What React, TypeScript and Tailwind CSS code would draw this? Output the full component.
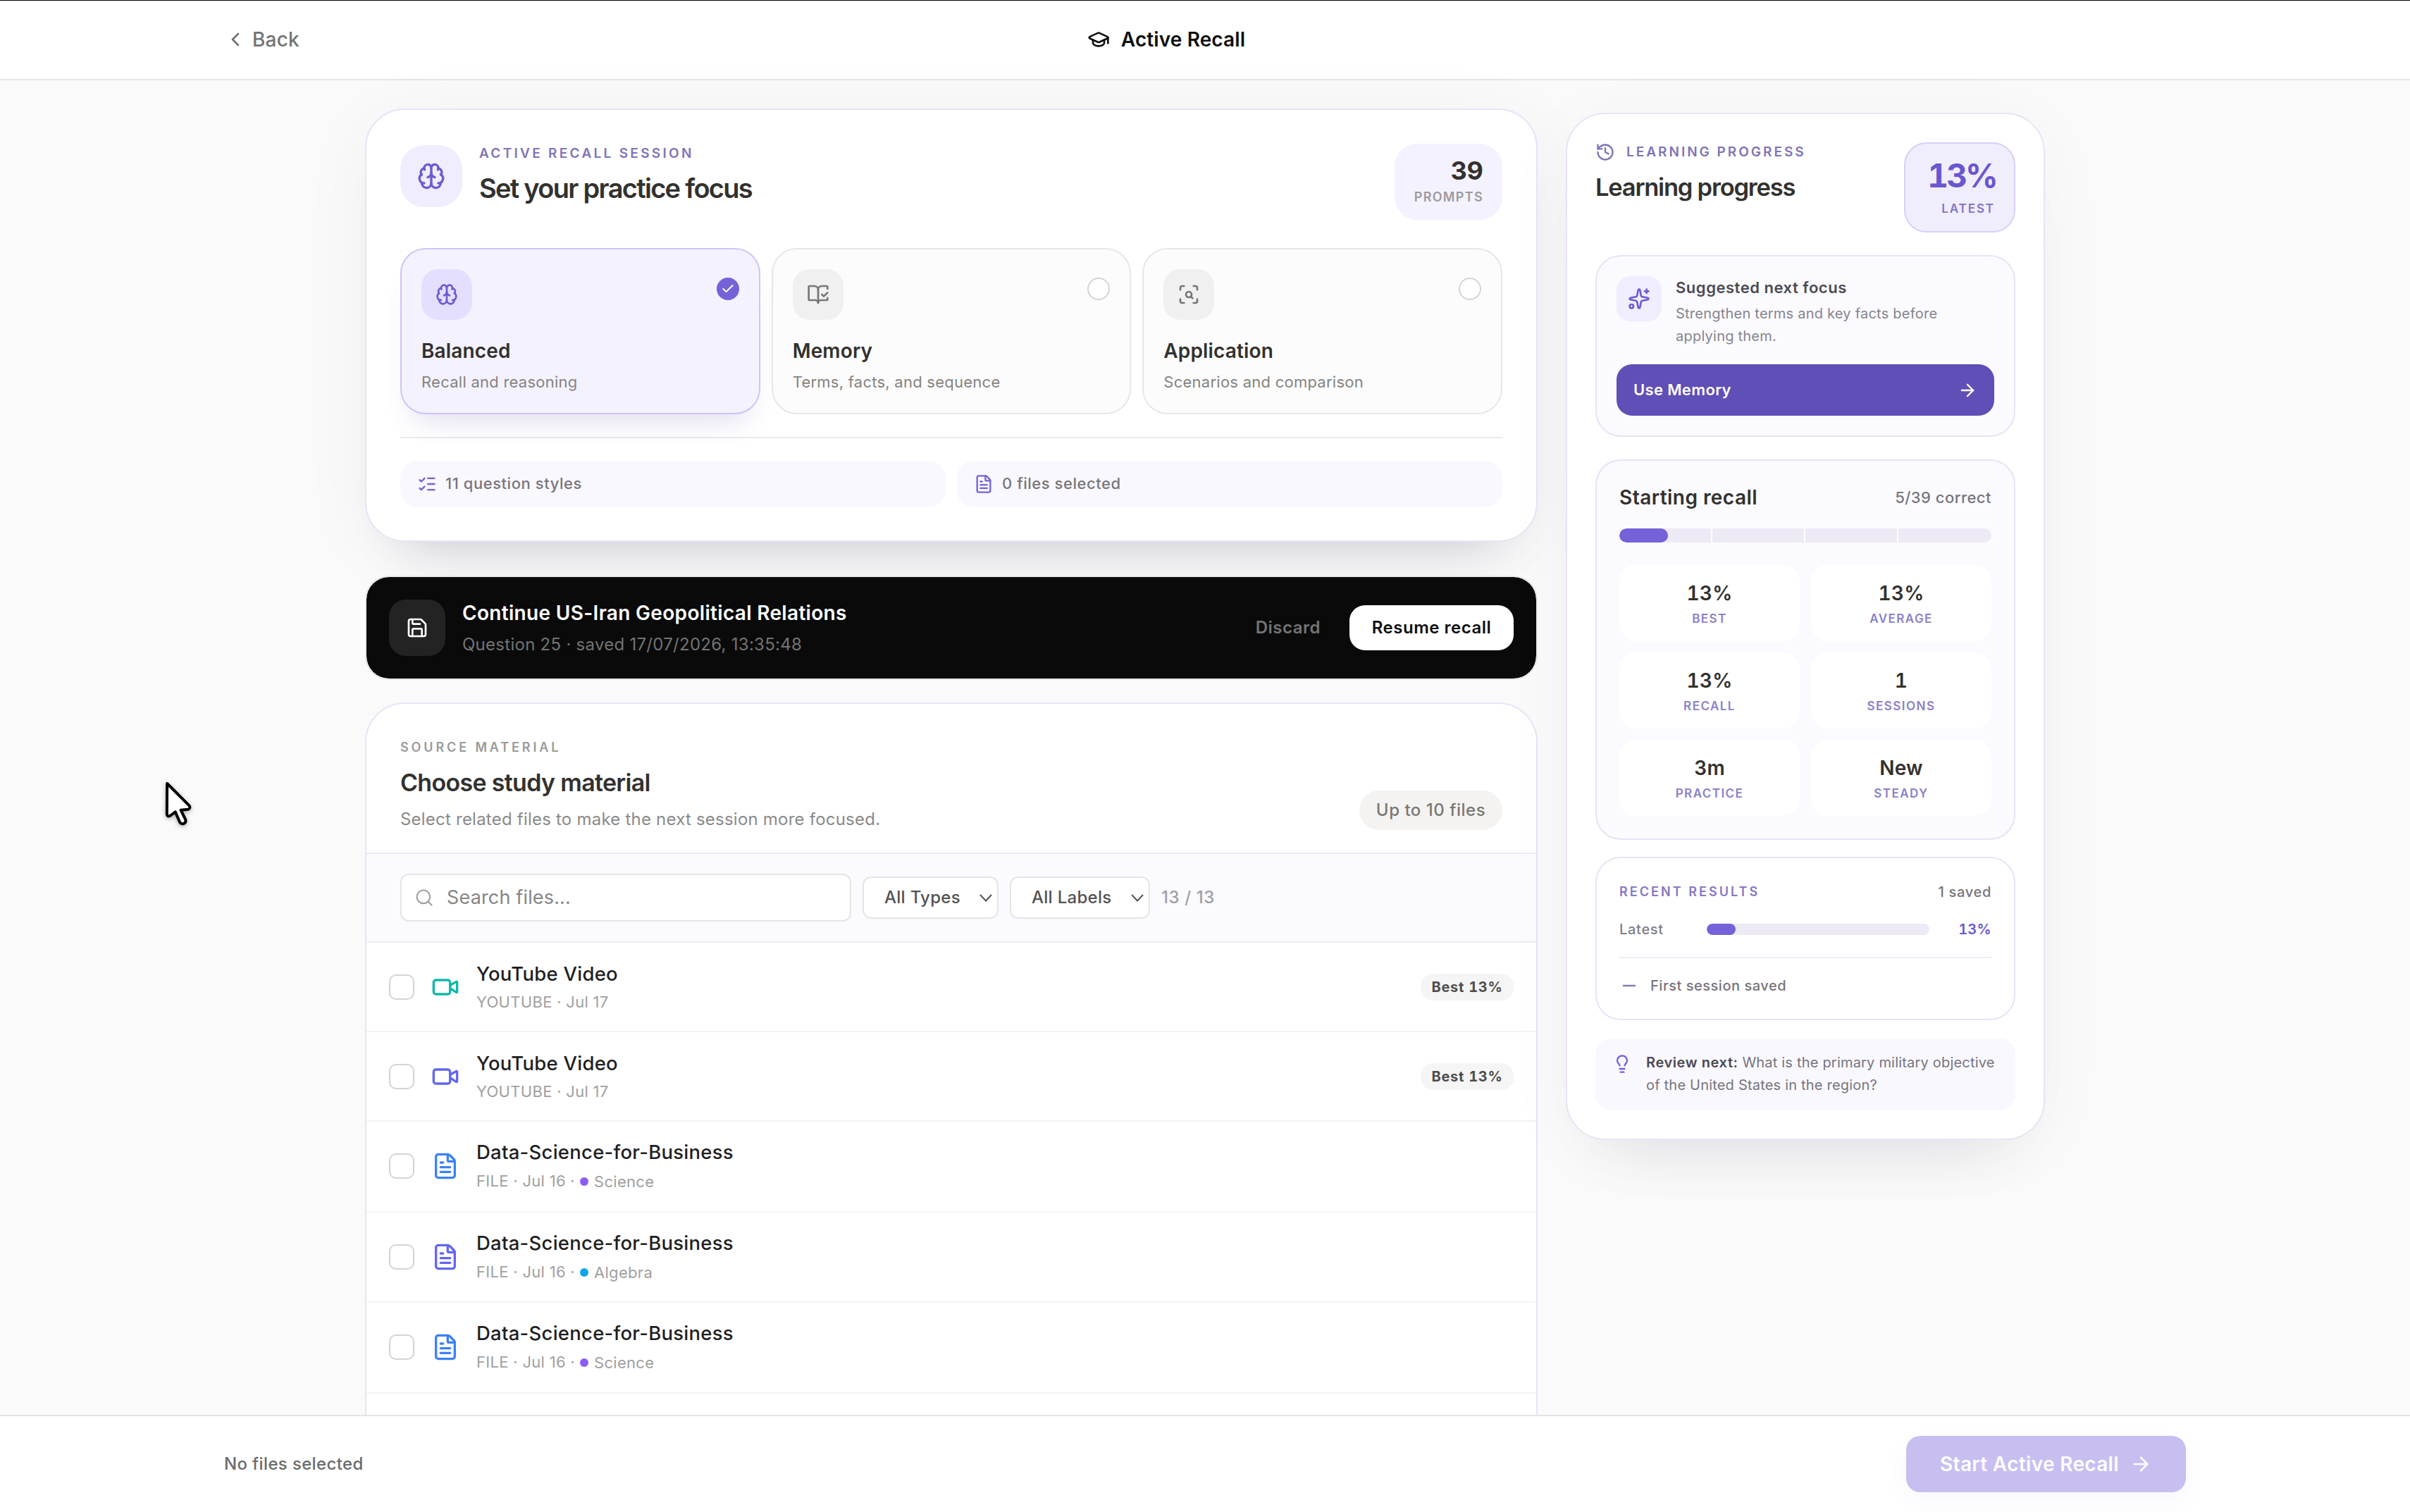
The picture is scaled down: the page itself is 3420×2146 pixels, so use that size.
import { useState } from 'react';
import {
  ArrowRight,
  BookOpenCheck,
  Brain,
  Check,
  ChevronLeft,
  FileText,
  GraduationCap,
  History,
  Lightbulb,
  ListChecks,
  Minus,
  Save,
  ScanSearch,
  Search,
  Sparkles,
  Video,
} from 'lucide-react';

const focusModes = [
  { id: 'balanced', name: 'Balanced', description: 'Recall and reasoning', icon: Brain },
  { id: 'memory', name: 'Memory', description: 'Terms, facts, and sequence', icon: BookOpenCheck },
  { id: 'application', name: 'Application', description: 'Scenarios and comparison', icon: ScanSearch },
];

const stats = [
  { value: '13%', label: 'Best' },
  { value: '13%', label: 'Average' },
  { value: '13%', label: 'Recall' },
  { value: '1', label: 'Sessions' },
  { value: '3m', label: 'Practice' },
  { value: 'New', label: 'Steady' },
];

const files = [
  { id: 1, title: 'YouTube Video', type: 'YOUTUBE', date: 'Jul 17', color: 'text-[#14b8a6]', best: 13 },
  { id: 2, title: 'YouTube Video', type: 'YOUTUBE', date: 'Jul 17', color: 'text-[#6366f1]', best: 13 },
  { id: 3, title: 'Data-Science-for-Business', type: 'FILE', date: 'Jul 16', color: 'text-[#3b82f6]', label: 'Science', dot: 'bg-[#8b5cf6]' },
  { id: 4, title: 'Data-Science-for-Business', type: 'FILE', date: 'Jul 16', color: 'text-[#6366f1]', label: 'Algebra', dot: 'bg-[#0ea5e9]' },
  { id: 5, title: 'Data-Science-for-Business', type: 'FILE', date: 'Jul 16', color: 'text-[#3b82f6]', label: 'Science', dot: 'bg-[#8b5cf6]' },
];

const score = 13;

function SelectBox({ label, className }: { label: string; className: string }) {
  return (
    <button
      className={`flex h-[60px] shrink-0 items-center justify-between rounded-xl border-2 border-[#e5e5e5] bg-white pl-[29px] pr-[7px] text-2xl font-medium tracking-[0.28px] text-[#525252] ${className}`}
    >
      {label}
      <svg width="18" height="11" viewBox="0 0 18 11" fill="none" stroke="currentColor" strokeWidth="2">
        <path d="M1 1l8 8.5L17 1" />
      </svg>
    </button>
  );
}

function FocusPanel() {
  const [mode, setMode] = useState('balanced');

  return (
    <section className="rounded-[56px] border-2 border-[#e6e4f6] bg-white px-12 pb-[47px] pt-12 shadow-[0_16px_110px_rgba(24,20,60,0.045),0_56px_72px_-56px_rgba(24,20,60,0.2)]">
      <div className="flex h-[108px] items-start justify-between">
        <div className="flex gap-6">
          <div className="mt-0.5 flex size-[88px] items-center justify-center rounded-[34px] bg-[#f0edfe] text-[#6d5bd0]">
            <Brain className="size-10" />
          </div>
          <div>
            <p className="text-[19px] font-semibold uppercase leading-7 tracking-[3.3px] text-[#7f73b8]">
              Active Recall Session
            </p>
            <h1 className="mt-[11px] text-[38px] font-semibold leading-[48px] tracking-[-1.7px] text-[#32312e]">
              Set your practice focus
            </h1>
          </div>
        </div>
        <div className="h-[108px] w-[153px] rounded-[32px] bg-[#f4f2ff] pr-[27px] pt-[18px] text-right">
          <p className="text-4xl font-bold leading-10 text-[#32312e]">39</p>
          <p className="mt-1.5 text-lg font-semibold uppercase leading-6 tracking-[1.33px] text-[#9c9a9c]">Prompts</p>
        </div>
      </div>

      <div className="mt-10 grid grid-cols-3 gap-4">
        {focusModes.map(({ id, name, description, icon: Icon }) => {
          const active = id === mode;
          return (
            <button
              key={id}
              onClick={() => setMode(id)}
              className={`h-[236px] rounded-[36px] border-2 px-7 pb-7 pt-[27px] text-left ${
                active
                  ? 'border-[#cdc5f9] bg-[#f4f2ff] shadow-[0_28px_40px_-20px_rgba(70,55,160,0.18)]'
                  : 'border-[#e7e7e7] bg-[#fcfcfc]'
              }`}
            >
              <div className="flex items-start justify-between">
                <span
                  className={`flex size-[72px] items-center justify-center rounded-3xl ${
                    active ? 'bg-[#e5dfff] text-[#6d5bd0]' : 'bg-[#f0f0f0] text-[#767676]'
                  }`}
                >
                  <Icon className="size-8" />
                </span>
                {active ? (
                  <span className="mt-3 flex size-8 items-center justify-center rounded-full bg-[#7562d8] text-white">
                    <Check className="size-5" strokeWidth={2.4} />
                  </span>
                ) : (
                  <span className="mt-3 size-8 rounded-full border-2 border-[#d4d4d4] bg-white" />
                )}
              </div>
              <h3 className="mt-[26px] text-[28px] font-semibold leading-9 tracking-[0.15px] text-[#32312e]">{name}</h3>
              <p className="mt-[11px] text-[22px] leading-[30px] tracking-[0.25px] text-[#85837f]">{description}</p>
            </button>
          );
        })}
      </div>

      <div className="mt-8 grid grid-cols-2 gap-4 border-t-2 border-[#ebebeb] pt-8 text-[22px] font-medium tracking-[0.55px] text-[#78767a]">
        <div className="flex h-[66px] items-center gap-3 rounded-3xl bg-[#f9f8fe] px-6 pb-px">
          <ListChecks className="size-7 text-[#7562d8]" />
          11 question styles
        </div>
        <div className="flex h-[66px] items-center gap-3 rounded-3xl bg-[#f9f8fe] px-6 pb-px">
          <FileText className="size-7 text-[#7562d8]" />
          0 files selected
        </div>
      </div>
    </section>
  );
}

function ResumeBanner() {
  return (
    <section className="mt-12 flex h-[148px] items-center rounded-[34px] border-2 border-[#e8e8ea] bg-[#0a0a0a] bg-clip-padding px-8">
      <div className="flex size-20 items-center justify-center rounded-3xl bg-[#232323] text-white">
        <Save className="size-8" />
      </div>
      <div className="ml-6 pt-px">
        <h2 className="text-[28px] font-semibold leading-9 tracking-[0.32px] text-white">
          Continue US-Iran Geopolitical Relations
        </h2>
        <p className="mt-[11px] text-2xl leading-8 tracking-[0.27px] text-[#737373]">
          Question 25 · saved 17/07/2026, 13:35:48
        </p>
      </div>
      <div className="ml-auto flex items-center gap-[41px]">
        <button className="text-2xl font-semibold tracking-[0.5px] text-[#737373]">Discard</button>
        <button className="h-16 w-[233px] rounded-[22px] bg-white text-2xl font-semibold tracking-[0.5px] text-[#0f0f0f]">
          Resume recall
        </button>
      </div>
    </section>
  );
}

function SourceMaterial() {
  return (
    <section className="mt-8 overflow-hidden rounded-t-[56px] border-2 border-b-0 border-[#e6e4f6] bg-white">
      <div className="flex items-end justify-between border-b-2 border-[#ededf0] px-12 pb-8 pt-12">
        <div>
          <p className="text-lg font-semibold uppercase leading-7 tracking-[3.88px] text-[#9a9a9a]">Source Material</p>
          <h2 className="mt-3.5 text-[34px] font-semibold leading-[44px] tracking-[-0.69px] text-[#32312e]">
            Choose study material
          </h2>
          <p className="-mb-px mt-3.5 text-2xl leading-8 tracking-[0.22px] text-[#8a8a8a]">
            Select related files to make the next session more focused.
          </p>
        </div>
        <span className="flex h-14 w-[203px] items-center justify-center rounded-full bg-[#f4f3f1] text-2xl font-medium tracking-[0.52px] text-[#7a7873]">
          Up to 10 files
        </span>
      </div>

      <div className="flex items-center gap-4 border-b-2 border-[#ededf0] bg-[#fbfaff] px-12 py-7">
        <div className="flex h-[68px] w-[640px] items-center rounded-xl border-2 border-[#e5e5e5] bg-white pl-[18px] text-[27px] tracking-[0.16px] text-[#868686]">
          <Search className="mr-[18px] size-7 text-[#9f9f9f]" strokeWidth={1.8} />
          Search files...
        </div>
        <SelectBox label="All Types" className="w-[193px]" />
        <SelectBox label="All Labels" className="w-[199px]" />
        <span className="text-2xl font-medium tracking-[0.6px] text-[#a0a0a4]">13 / 13</span>
      </div>

      {files.map((file) => (
        <div
          key={file.id}
          className={`flex items-center gap-6 border-b-2 border-[#f4f4f5] px-8 ${file.label ? 'h-[128.6px]' : 'h-[127px]'}`}
        >
          <span className="size-9 shrink-0 rounded-[10px] border-2 border-[#d4d4d4] bg-white" />
          {file.type === 'YOUTUBE' ? (
            <Video className={`size-10 ${file.color}`} />
          ) : (
            <FileText className={`size-10 ${file.color}`} />
          )}
          <div className="flex-1 pb-0.5">
            <h3 className="text-[27.5px] font-medium leading-9 tracking-[0.25px] text-[#1f1f1f]">{file.title}</h3>
            <div className="mt-2 flex items-center text-[22px] leading-7 tracking-[0.3px] text-[#a0a0a0]">
              <span>
                {file.type} · {file.date}
                {file.label && ' ·'}
              </span>
              {file.label && (
                <span className="ml-[7px] mt-0.5 flex h-7 items-center gap-2">
                  <span className={`size-3 rounded-full ${file.dot}`} />
                  {file.label}
                </span>
              )}
            </div>
          </div>
          {file.best && (
            <span className="flex h-[38px] w-[132px] items-center justify-center rounded-[18px] bg-[#f5f5f5] text-xl font-bold tabular-nums tracking-[0.7px] text-[#4d4d4d]">
              Best {file.best}%
            </span>
          )}
        </div>
      ))}
      <div className="h-40" />
    </section>
  );
}

function ProgressPanel() {
  return (
    <aside className="mt-1.5 w-[680px] rounded-[56px] border-2 border-[#e6e4f6] bg-white p-10 shadow-[0_16px_110px_rgba(24,20,60,0.035),0_64px_88px_-64px_rgba(24,20,60,0.12)]">
      <div className="flex items-start justify-between">
        <div>
          <p className="flex items-center gap-4 text-[19px] font-semibold uppercase leading-7 tracking-[3px] text-[#7f73b8]">
            <History className="size-7" />
            Learning Progress
          </p>
          <h2 className="mt-3.5 text-[34.5px] font-semibold leading-[44px] tracking-[-1.22px] text-[#32312e]">
            Learning progress
          </h2>
        </div>
        <div className="h-32 w-[158px] rounded-[32px] border-2 border-[#d6d0fa] bg-[#f0edfd] pr-[27px] pt-[17px] text-right">
          <p className="-mr-0.5 text-[46px] font-bold leading-[56px] tabular-nums tracking-[-2.8px] text-[#6a56cf]">
            {score}%
          </p>
          <p className="mt-[7px] text-[17px] font-semibold uppercase leading-6 tracking-[1.9px] text-[#8275c4]">Latest</p>
        </div>
      </div>

      <div className="mt-8 rounded-[36px] border-2 border-[#e6e4f6] bg-[#fbfaff] p-7">
        <div className="flex gap-5">
          <span className="flex size-16 shrink-0 items-center justify-center rounded-[20px] bg-[#f0edfe] text-[#6d5bd0]">
            <Sparkles className="size-8" />
          </span>
          <div className="pt-0.5">
            <h3 className="text-[22px] font-semibold leading-7 tracking-[0.53px] text-[#4b4a52]">Suggested next focus</h3>
            <p className="mt-[7px] text-xl leading-8 tracking-[0.23px] text-[#85848c]">
              Strengthen terms and key facts before applying them.
            </p>
          </div>
        </div>
        <button className="mt-6 flex h-[73px] w-full items-center justify-between rounded-[22px] bg-[#5f4fb6] px-6 text-[22px] font-semibold tracking-[0.35px] text-white">
          Use Memory
          <ArrowRight className="size-7" />
        </button>
      </div>

      <div className="mt-8 rounded-[36px] border-2 border-[#e6e4f6] bg-[#fbfaff] p-8">
        <div className="flex h-10 items-center justify-between">
          <h3 className="text-[28px] font-semibold tracking-[0.45px] text-[#32312e]">Starting recall</h3>
          <span className="text-[22px] font-medium tracking-[0.47px] text-[#76757d]">5/39 correct</span>
        </div>
        <div className="relative mt-6 h-5 overflow-hidden rounded-full bg-[#edeaf5]">
          <div className="h-full rounded-full bg-[#7562d8]" style={{ width: `${score}%` }} />
          <div className="absolute inset-0 grid grid-cols-4">
            <span className="border-r-2 border-white" />
            <span className="border-r-2 border-white" />
            <span className="border-r-2 border-white" />
          </div>
        </div>
        <div className="mt-8 grid grid-cols-2 gap-4">
          {stats.map((stat) => (
            <div key={stat.label} className="h-[108px] rounded-3xl bg-white pt-[22px] text-center">
              <p className="text-[28px] font-semibold leading-9 tabular-nums tracking-[0.2px] text-[#32312e]">{stat.value}</p>
              <p className="mt-1.5 text-[17px] font-semibold uppercase leading-6 tracking-[1.45px] text-[#8b7fc8]">
                {stat.label}
              </p>
            </div>
          ))}
        </div>
      </div>

      <div className="mt-6 rounded-[36px] border-2 border-[#e6e4f6] bg-white px-8 pb-[33px] pt-8">
        <div className="flex h-8 items-center justify-between">
          <p className="text-lg font-semibold uppercase tracking-[3.05px] text-[#8578c4]">Recent Results</p>
          <span className="text-xl font-medium tracking-[0.7px] text-[#76747a]">1 saved</span>
        </div>
        <div className="mt-[23px] flex h-7 items-center">
          <span className="w-[124px] text-xl font-medium tracking-[0.7px] text-[#807d88]">Latest</span>
          <div className="h-4 flex-1 overflow-hidden rounded-full bg-[#edeaf5]">
            <div className="h-full rounded-full bg-[#7562d8]" style={{ width: `${score}%` }} />
          </div>
          <span className="w-[88px] text-right text-xl font-semibold tabular-nums tracking-[0.3px] text-[#6a56cf]">
            {score}%
          </span>
        </div>
        <div className="mt-[25px] flex items-center gap-4 border-t-2 border-[#eeecf5] pt-[25px] text-xl font-medium leading-7 tracking-[0.53px] text-[#76747a]">
          <Minus className="size-7 text-[#837db0]" />
          First session saved
        </div>
      </div>

      <div className="mt-[26px] flex gap-5 rounded-[22px] bg-[#f9f8fe] px-6 pb-5 pt-[18px]">
        <Lightbulb className="mt-1 size-7 shrink-0 text-[#7562d8]" />
        <p className="text-xl leading-8 tracking-[0.2px] text-[#76747f]">
          <strong className="font-semibold tracking-[0.6px] text-[#4b4a52]">Review next:</strong> What is the primary
          military objective of the United States in the region?
        </p>
      </div>
    </aside>
  );
}

export default function App() {
  return (
    <div className="flex h-screen flex-col overflow-hidden bg-[#fafafa] font-['Inter',sans-serif] antialiased">
      <header className="h-[114px] shrink-0 border-b-2 border-t border-b-[#e5e5e5] border-t-black bg-white">
        <div className="mx-auto flex h-full w-[2784px] items-center justify-between pb-px text-[28px]">
          <button className="flex w-[107px] items-center gap-2 font-medium tracking-[0.2px] text-[#737373]">
            <ChevronLeft className="size-8 shrink-0" />
            Back
          </button>
          <div className="flex items-center gap-4 font-semibold tracking-[0.12px] text-[#0f0f0f]">
            <GraduationCap className="size-8" />
            Active Recall
          </div>
          <div className="w-[217px]" />
        </div>
      </header>

      <main className="mx-auto flex min-h-0 w-[2384px] flex-1 items-start gap-10 pt-10">
        <div className="w-[1664px]">
          <FocusPanel />
          <ResumeBanner />
          <SourceMaterial />
        </div>
        <ProgressPanel />
      </main>

      <footer className="relative h-[138px] shrink-0 border-t-2 border-[#e5e5e5] bg-white">
        <div className="mx-auto flex h-full w-[2784px] items-center justify-between">
          <span className="text-2xl font-medium tracking-[0.35px] text-[#6b6b6b]">No files selected</span>
          <button className="flex h-20 w-[397px] items-center justify-between rounded-[20px] bg-[#c8bff0] px-12 text-[28px] font-semibold tracking-[0.33px] text-[#fdfcff] shadow-[0_12px_32px_rgba(117,98,216,0.05)]">
            Start Active Recall
            <ArrowRight className="size-8" />
          </button>
        </div>
      </footer>

      {/* mouse pointer */}
      <svg
        className="absolute left-[230px] top-[1106px] drop-shadow-[0_2px_3px_rgba(0,0,0,0.3)]"
        width="47"
        height="70"
        viewBox="60 50 140 210"
        fill="white"
        stroke="black"
        strokeWidth="12"
        strokeLinejoin="round"
      >
        <path d="M81 68L175 162Q182 173 171 178L139 181L159 221Q163 234 152 239Q141 242 135 233L116 189L93 206Q81 211 80 199Z" />
      </svg>
    </div>
  );
}
